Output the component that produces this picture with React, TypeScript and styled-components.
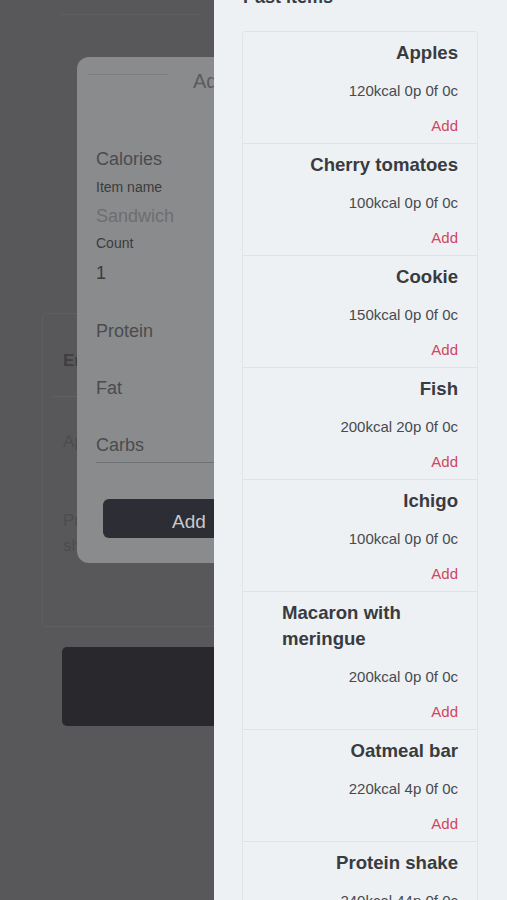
import React from "react";
import styled, { createGlobalStyle } from "styled-components";

const GlobalStyle = createGlobalStyle`
  html, body {
    margin: 0;
    padding: 0;
    width: 507px;
    height: 900px;
    overflow: hidden;
    font-family: "Liberation Sans", Arial, sans-serif;
  }
  * { box-sizing: border-box; }
`;

const Screen = styled.div`
  position: relative;
  width: 507px;
  height: 900px;
  overflow: hidden;
  background: #58585a;
`;

/* ---------- page behind the overlays ---------- */
const PageContent = styled.div`
  display: flex;
  flex-direction: column;
  padding-top: 14px;
`;

const TopRule = styled.div`
  margin-left: 60px;
  width: 140px;
  height: 1px;
  background: #5f5f61;
`;

const EntriesCard = styled.section`
  margin: 298px 42px 0 42px;
  height: 314px;
  border: 1px solid #5f5f61;
  border-radius: 4px;
  display: flex;
  flex-direction: column;
`;

const EntriesHeader = styled.div`
  margin: 0 10px;
  padding: 36px 20px 0 10px;
  height: 83px;
  font-size: 17px;
  font-weight: 700;
  line-height: 22px;
  color: #3e3e40;
  border-bottom: 1px solid #626264;
`;

const EntryName = styled.div<{ $top: number }>`
  margin: ${(p) => p.$top}px 0 0 20px;
  width: 60px;
  font-size: 17px;
  line-height: 25px;
  color: #4c4c4e;
`;

const DarkButton = styled.div`
  margin: 20px 62px 0 62px;
  height: 79px;
  border-radius: 5px;
  background: #29292d;
`;

/* ---------- modal ---------- */
const Modal = styled.div`
  position: absolute;
  left: 77px;
  top: 57px;
  width: 300px;
  height: 506px;
  border-radius: 12px;
  background: #8a8b8d;
  display: flex;
  flex-direction: column;
`;

const ModalHeader = styled.div`
  display: flex;
  align-items: flex-start;
  padding: 12px 0 0 11px;
  height: 90px;
`;

const HeaderRule = styled.div`
  width: 80px;
  height: 1px;
  margin-top: 5px;
  background: #7d7e80;
`;

const ModalTitle = styled.div`
  margin-left: 25px;
  font-size: 20px;
  line-height: 24px;
  color: #5a5b5d;
  white-space: nowrap;
`;

const Form = styled.div`
  display: flex;
  flex-direction: column;
  padding: 0 0 0 19px;
`;

const FieldText = styled.div<{ $gap: number; $small?: boolean; $tone?: "dark" | "mid" | "light"; $underline?: boolean }>`
  margin-top: ${(p) => p.$gap}px;
  font-size: ${(p) => (p.$small ? 14 : 18)}px;
  line-height: ${(p) => (p.$small ? 18 : 24)}px;
  color: ${(p) => (p.$tone === "light" ? "#6d6e70" : p.$tone === "dark" ? "#3a3b3d" : "#4a4b4d")};
  ${(p) => (p.$underline ? "padding-bottom: 5px; border-bottom: 1px solid #6f7072;" : "")}
`;

const ModalButton = styled.div`
  margin: 36px 0 0 26px;
  width: 172px;
  height: 39px;
  padding-top: 6px;
  border-radius: 6px;
  background: #2c2d35;
  color: #c9c9cb;
  font-size: 19px;
  display: flex;
  align-items: center;
  justify-content: center;
`;

/* ---------- drawer ---------- */
const Drawer = styled.aside`
  position: absolute;
  top: 0;
  right: 0;
  width: 293px;
  height: 900px;
  overflow: hidden;
  background: #eef1f4;
  padding: 0 29px 0 28px;
  display: flex;
  flex-direction: column;
`;

const DrawerTitle = styled.h2`
  margin: -15px 0 0 1px;
  font-size: 18px;
  font-weight: 700;
  line-height: 24px;
  color: #3a3d42;
`;

const ItemList = styled.div`
  margin-top: 22px;
  border: 1px solid #e0e3e7;
  border-radius: 3px;
  display: flex;
  flex-direction: column;
`;

const ItemCard = styled.div`
  display: flex;
  flex-direction: column;
  align-items: flex-end;
  padding: 8px 19px 7px 20px;
  & + & {
    border-top: 1px solid #e0e3e7;
  }
`;

const ItemName = styled.div`
  max-width: 176px;
  font-size: 18.6px;
  font-weight: 700;
  line-height: 26px;
  color: #383b40;
`;

const ItemMacros = styled.div`
  margin-top: 15px;
  font-size: 15px;
  line-height: 20px;
  color: #474a4f;
`;

const AddLink = styled.div`
  margin-top: 15px;
  font-size: 15px;
  line-height: 20px;
  color: #d0465e;
`;

const items = [
  { name: "Apples", macros: "120kcal 0p 0f 0c" },
  { name: "Cherry tomatoes", macros: "100kcal 0p 0f 0c" },
  { name: "Cookie", macros: "150kcal 0p 0f 0c" },
  { name: "Fish", macros: "200kcal 20p 0f 0c" },
  { name: "Ichigo", macros: "100kcal 0p 0f 0c" },
  { name: "Macaron with meringue", macros: "200kcal 0p 0f 0c" },
  { name: "Oatmeal bar", macros: "220kcal 4p 0f 0c" },
  { name: "Protein shake", macros: "240kcal 44p 0f 0c" },
];

export default function App() {
  return (
    <>
      <GlobalStyle />
      <Screen>
        <PageContent>
          <TopRule />
          <EntriesCard>
            <EntriesHeader>Entries</EntriesHeader>
            <EntryName $top={32}>Apples</EntryName>
            <EntryName $top={54}>Protein shake</EntryName>
          </EntriesCard>
          <DarkButton />
        </PageContent>

        <Modal>
          <ModalHeader>
            <HeaderRule />
            <ModalTitle>Add item</ModalTitle>
          </ModalHeader>
          <Form>
            <FieldText $gap={0}>Calories</FieldText>
            <FieldText $gap={7} $small $tone="dark">Item name</FieldText>
            <FieldText $gap={8} $tone="light">Sandwich</FieldText>
            <FieldText $gap={6} $small $tone="dark">Count</FieldText>
            <FieldText $gap={9} $tone="dark">1</FieldText>
            <FieldText $gap={34}>Protein</FieldText>
            <FieldText $gap={33}>Fat</FieldText>
            <FieldText $gap={33} $underline>Carbs</FieldText>
          </Form>
          <ModalButton>Add</ModalButton>
        </Modal>

        <Drawer>
          <DrawerTitle>Past items</DrawerTitle>
          <ItemList>
            {items.map((it) => (
              <ItemCard key={it.name}>
                <ItemName>{it.name}</ItemName>
                <ItemMacros>{it.macros}</ItemMacros>
                <AddLink>Add</AddLink>
              </ItemCard>
            ))}
          </ItemList>
        </Drawer>
      </Screen>
    </>
  );
}
